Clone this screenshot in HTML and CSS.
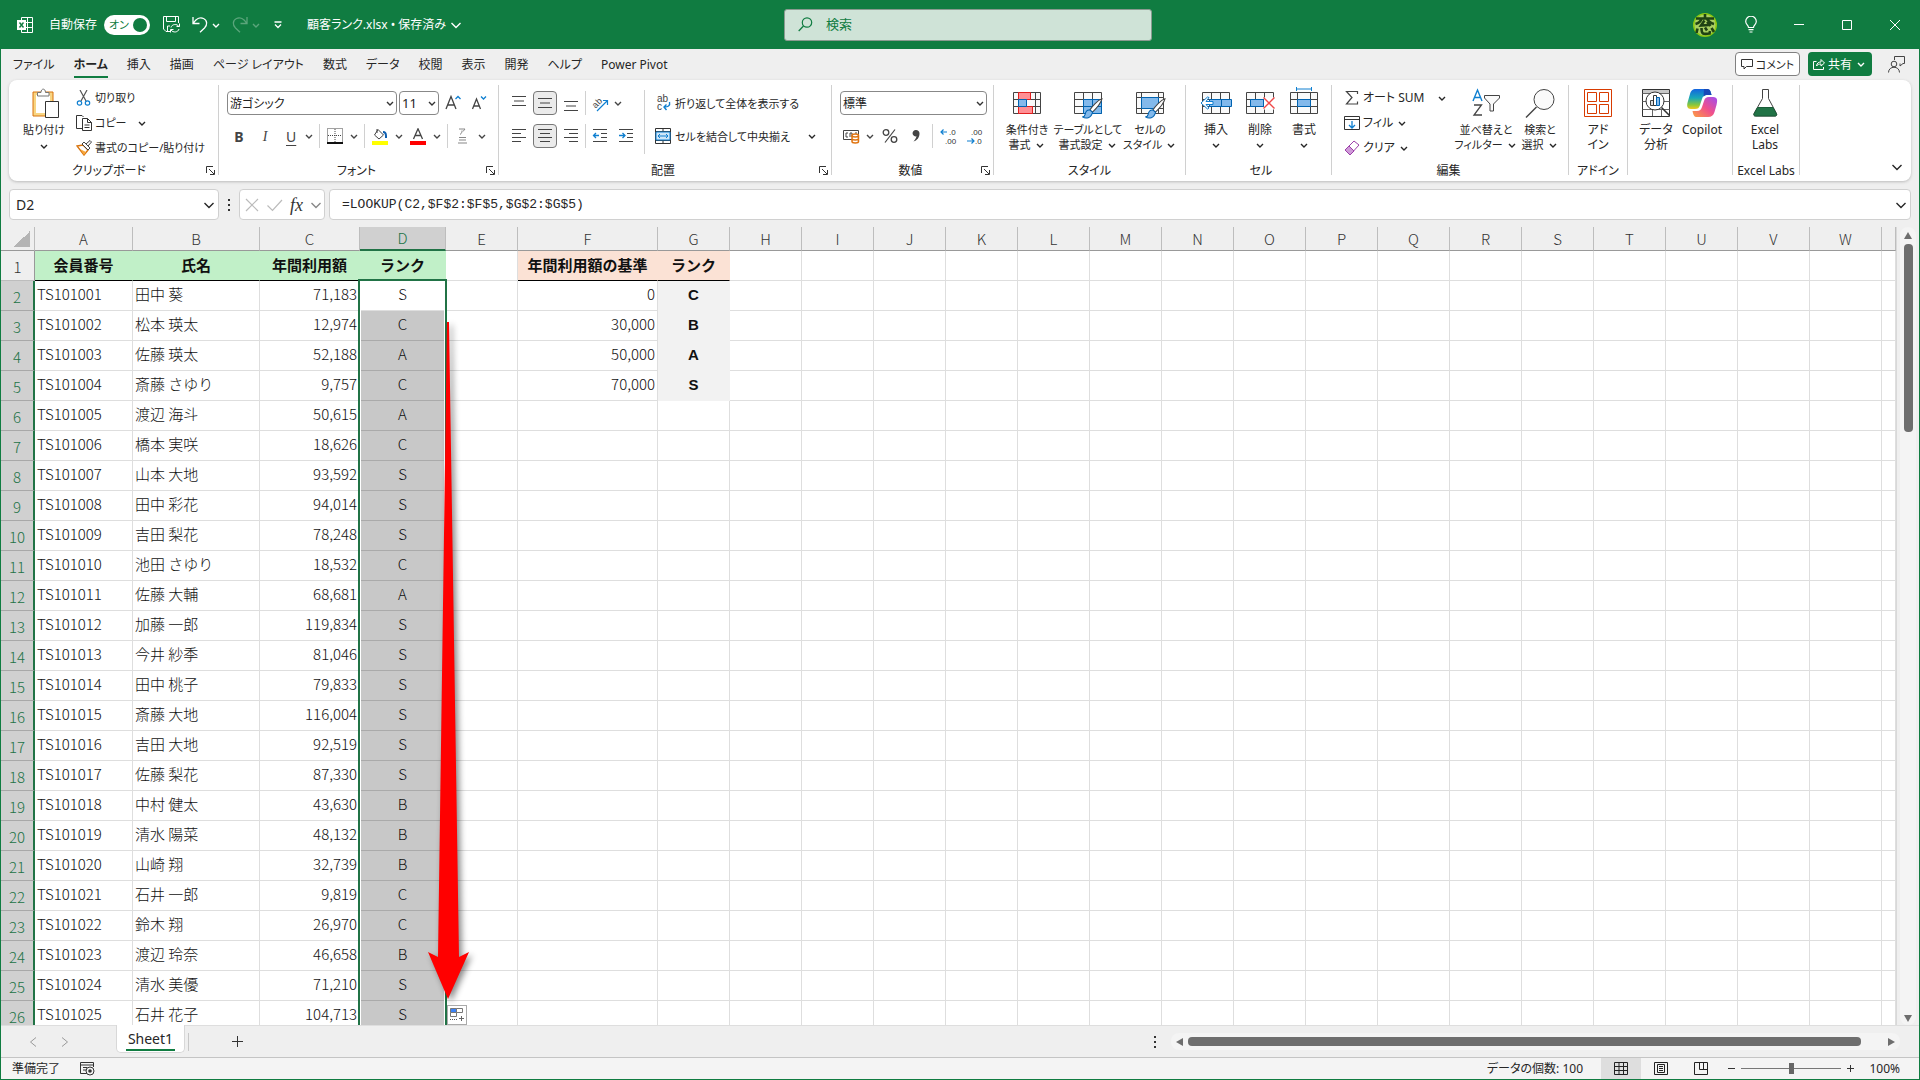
FILE: index.html
```html
<!DOCTYPE html>
<html lang="ja">
<head>
<meta charset="utf-8">
<title>顧客ランク.xlsx</title>
<link rel="stylesheet" href="styles.css">
</head>
<body>
<svg class="defs" aria-hidden="true">
  <symbol id="chev" viewBox="0 0 12 12"><path d="M3 5l3 3 3-3" fill="none" stroke="currentColor" stroke-width="1.4"/></symbol>
  <symbol id="chev-lg" viewBox="0 0 14 14"><path d="M2.500 5l4.500 4.500L11.500 5" fill="none" stroke="currentColor" stroke-width="1.400"/></symbol>
  <symbol id="launch" viewBox="0 0 9 9"><path d="M.5 7V.5H7M3 3l5 5M8.500 4v4.500H4" fill="none" stroke="#333"/></symbol>
  <symbol id="brush" viewBox="0 0 20 20"><path d="M19 .8C15 2 9.500 8 7.500 11.500l2.500 2C13 10.500 18 5 19 .8z" fill="#fff" stroke="#444"/><path d="M7.500 11.500C5 11 3.500 13 3 15.500c-.3 1.500-1.500 2.300-2.500 2.500 3 2 8.500 1.500 9.500-4.500z" fill="#83b9eb" stroke="#0063b1"/></symbol>
</svg>
<div class="app">
  <header class="titlebar">
    <div class="title-left">
      <svg class="ico-xl" width="16" height="16" viewBox="0 0 16 16"><path d="M4.500 3.500v-3h11v15h-11v-3M4.500 5.500h11M8 10.500h7.500M10.500.5v15M9 5.500h6.500" fill="none" stroke="#fff"/><rect y="3" width="9" height="10" fill="#fff"/><path d="M2.500 5.500l4 5M6.500 5.500l-4 5" stroke="#107c41" stroke-width="1.400"/></svg>
      <label class="autosave"><span>自動保存</span><input type="checkbox" checked><span class="toggle"><span>オン</span></span></label>
      <button class="tbtn save" aria-label="保存"><svg width="17" height="17" viewBox="0 0 17 17"><path d="M7 15.500H3L.5 13V.5h15V7M3.500.5v5h9v-5M4.500 15V10H7" fill="none" stroke="#fff"/><path d="M8 11.500c.8-3.500 6-4 8-1M16.500 7.500v3h-3M16 13c-.8 3.500-6 4-8 1M7.500 16.500v-3h3" fill="none" stroke="#fff"/></svg></button>
      <button class="tbtn undo" aria-label="元に戻す"><svg width="16" height="17" viewBox="0 0 16 17"><path d="M1 1v6.500h6.500M1.500 7C4 3 8 .8 11.500 2.500 15.500 4.500 15.500 9 12.500 12L8 16.300" fill="none" stroke="#fff" stroke-width="1.300"/></svg><svg class="c"><use href="#chev"/></svg></button>
      <button class="tbtn redo" aria-label="やり直し"><svg width="16" height="17" viewBox="0 0 16 17"><path d="M15 1v6.500H8.500M14.500 7C12 3 8 .8 4.500 2.500.5 4.500.5 9 3.500 12L8 16.300" fill="none" stroke="currentColor" stroke-width="1.300"/></svg><svg class="c"><use href="#chev"/></svg></button>
      <button class="tbtn custom" aria-label="カスタマイズ"><svg width="8" height="8" viewBox="0 0 8 8"><path d="M.5 1h7M1 3.500L4 6.500l3-3" fill="none" stroke="#fff" stroke-width="1.300"/></svg></button>
      <button class="tbtn docname">顧客ランク.xlsx • 保存済み<svg class="cl"><use href="#chev-lg"/></svg></button>
    </div>
    <label class="search"><svg width="15" height="15" viewBox="0 0 15 15"><circle cx="9" cy="5.500" r="4.700" fill="none" stroke="#107c41" stroke-width="1.200"/><path d="M5.500 9L.7 14" stroke="#107c41" stroke-width="1.300"/></svg><input type="text" placeholder="検索" aria-label="検索"></label>
    <div class="title-right">
      <svg class="avatar" width="24" height="24" viewBox="0 0 24 24"><circle cx="12" cy="12" r="12" fill="#8cc810"/><circle cx="12" cy="12" r="10.500" fill="#a9cf62"/><g fill="none" stroke="#1f4213" stroke-width="2.600"><path d="M3 5.500h18M12 1v5M8.500 5.500C8 8 6 10 2.500 11M14 5.500c1 3 3 4.500 7 5.500M11.500 7.500L8 12.500l8-.5M14 9l3.500 4M4.500 15.500L3.500 20M8.500 15c0 6 1 6.500 8 5.500l.5-2.500M12 14.500l2 3M18.500 15l2.500 4"/></g></svg>
      <button class="wbtn bulb" aria-label="ヒント"><svg width="12" height="17" viewBox="0 0 12 17"><path d="M3.500 11.500C3.500 9 .7 8.500.7 5.500a5.300 5.300 0 0 1 10.600 0c0 3-2.800 3.500-2.800 6zM3.500 13.700h5M4.500 16h3" fill="none" stroke="#fff" stroke-width="1.200"/></svg></button>
      <button class="wbtn" aria-label="最小化"><svg width="10" height="10"><path d="M0 4.500h10" stroke="#fff"/></svg></button>
      <button class="wbtn" aria-label="最大化"><svg width="10" height="10"><path d="M.5.5h9v9h-9z" fill="none" stroke="#fff"/></svg></button>
      <button class="wbtn" aria-label="閉じる"><svg width="10" height="10"><path d="M0 0l10 10M10 0L0 10" stroke="#fff"/></svg></button>
    </div>
  </header>

  <nav class="tabs">
    <a href="#">ファイル</a><a href="#" class="on">ホーム</a><a href="#">挿入</a><a href="#">描画</a><a href="#">ページ レイアウト</a><a href="#">数式</a><a href="#">データ</a><a href="#">校閲</a><a href="#">表示</a><a href="#">開発</a><a href="#">ヘルプ</a><a href="#">Power Pivot</a>
    <div class="tab-actions">
      <button class="comment"><svg width="12" height="12" viewBox="0 0 12 12"><path d="M.5 1.500h11v7H5.500L3 11V8.500H.5z" fill="none" stroke="#333"/></svg>コメント</button>
      <button class="share"><svg width="12" height="12" viewBox="0 0 12 12"><path d="M3.500 3.500h-3v8h10V9M3.500 8c.5-3 2-4 4.500-4V1.500L11.500 5 8 8V6C6 6 4.500 6.500 3.500 8z" fill="none" stroke="#fff"/></svg>共有<svg class="c"><use href="#chev"/></svg></button>
      <button class="person" aria-label="ユーザー"><svg width="17" height="17" viewBox="0 0 17 17"><path d="M6.500 4V.5h10v7H15L12 10V7.500" fill="none" stroke="#444"/><circle cx="6" cy="8" r="2.800" fill="none" stroke="#444"/><path d="M.5 16.500c0-7 11-7 11 0" fill="none" stroke="#444"/></svg></button>
    </div>
  </nav>

  <section class="ribbon">
    <div class="group g-clip">
      <div class="body">
        <button class="big"><svg width="32" height="32" viewBox="0 0 32 32"><path d="M5 5h20v24H5z" fill="#f8d583" stroke="#d8730c"/><path d="M8 8h14v18H8z" fill="#fff"/><path d="M9.500 9V5.500H13C13 1 17.500 1 17.500 5.500H21V9z" fill="#fff" stroke="#777"/><path d="M17.500 14.500h13v16h-13z" fill="#fff" stroke="#333"/></svg><span>貼り付け</span><svg class="c"><use href="#chev"/></svg></button>
        <div class="list">
          <button><svg width="16" height="16" viewBox="0 0 16 16"><path d="M4 0l6 11M11 0L5 11" stroke="#555" stroke-width="1.200"/><circle cx="3.500" cy="13" r="2.200" fill="none" stroke="#0f7fd0" stroke-width="1.200"/><circle cx="11.500" cy="13" r="2.200" fill="none" stroke="#0f7fd0" stroke-width="1.200"/></svg>切り取り</button>
          <button><svg width="16" height="16" viewBox="0 0 16 16"><path d="M6 13.500H.5V.5H6L7.500 2" fill="none" stroke="#333"/><path d="M6.500 3.500h5l4 4v8h-9zM11.500 3.500v4h4M8.500 10h5M8.500 12.500h5" fill="#fff" stroke="#333"/></svg><span class="wide">コピー</span><svg class="c"><use href="#chev"/></svg></button>
          <button><svg width="16" height="16" viewBox="0 0 16 16"><path d="M1 6l6-1 5 5-4 5z" fill="#fff" stroke="#d8730c" stroke-width="1.400"/><path d="M4 9l6 3-2 3z" fill="#f8a83c"/><path d="M6 4l2-2 6 6-2 2zM10 4l4-3.500L15.500 2 12 6" fill="#fff" stroke="#444"/></svg>書式のコピー/貼り付け</button>
        </div>
      </div>
      <div class="cap"><span>クリップボード</span><svg class="l"><use href="#launch"/></svg></div>
    </div>

    <div class="group g-font">
      <div class="body rows">
        <div class="row">
          <select class="combo w-font" aria-label="フォント"><option>游ゴシック</option></select>
          <select class="combo w-size" aria-label="サイズ"><option>11</option></select>
          <button class="ib" aria-label="拡大"><svg width="16" height="16" viewBox="0 0 16 16"><path d="M1 14L6 1.500 11 14M2.500 10h7" fill="none" stroke="#444" stroke-width="1.300"/><path d="M10.500 4L13 1.500 15.500 4" fill="none" stroke="#0f7fd0" stroke-width="1.300"/></svg></button>
          <button class="ib" aria-label="縮小"><svg width="16" height="16" viewBox="0 0 16 16"><path d="M1.500 14L5.500 4 9.500 14M3 11h5" fill="none" stroke="#444" stroke-width="1.300"/><path d="M10 1.500L12.500 4 15 1.500" fill="none" stroke="#0f7fd0" stroke-width="1.300"/></svg></button>
        </div>
        <div class="row">
          <button class="ib b">B</button><button class="ib i">I</button><button class="ib sp"><span class="u">U</span><svg class="c"><use href="#chev"/></svg></button>
          <i class="sep"></i>
          <button class="ib sp" aria-label="罫線"><svg width="16" height="16" viewBox="0 0 16 16"><path d="M.5.5h15v14H.5zM8 1v13M1 7.500h14" fill="none" stroke="#444" stroke-dasharray="1 1"/><path d="M0 15h16" stroke="#111" stroke-width="2"/></svg><svg class="c"><use href="#chev"/></svg></button>
          <i class="sep"></i>
          <button class="ib sp" aria-label="塗りつぶし"><svg width="16" height="17" viewBox="0 0 16 17"><path d="M6 1.500l5.500 5.500L7 11 2.500 7zM5 1v4" fill="#fff" stroke="#444"/><path d="M11 4c2.500 0 3 2 3 4v2" fill="none" stroke="#0f5fb0" stroke-width="2"/><rect y="13" width="16" height="4" fill="#ff0"/></svg><svg class="c"><use href="#chev"/></svg></button>
          <button class="ib sp" aria-label="文字色"><svg width="16" height="17" viewBox="0 0 16 17"><path d="M3.500 11L8 .8 12.500 11M5 7.500h6" fill="none" stroke="#444" stroke-width="1.300"/><rect y="13" width="16" height="4" fill="#f00"/></svg><svg class="c"><use href="#chev"/></svg></button>
          <i class="sep"></i>
          <button class="ib sp" aria-label="ふりがな"><svg width="14" height="16" viewBox="0 0 14 16"><path d="M4 1h6L8 3.500M7 2.500c0 2-.5 3-2 4" fill="none" stroke="#888"/><path d="M4 9.500h7M4 12h7M3 15h9" stroke="#888" stroke-width="1.200"/></svg><svg class="c"><use href="#chev"/></svg></button>
        </div>
      </div>
      <div class="cap"><span>フォント</span><svg class="l"><use href="#launch"/></svg></div>
    </div>

    <div class="group g-align">
      <div class="body">
        <div class="rows">
          <div class="row">
            <button class="ib" aria-label="上揃え"><svg width="16" height="16"><path d="M1 1.500h14M3 6h10M1 10.500h14" stroke="#444"/></svg></button>
            <button class="ib sel" aria-label="上下中央"><svg width="16" height="16"><path d="M1 3.500h14M3 8h10M1 12.500h14" stroke="#444"/></svg></button>
            <button class="ib" aria-label="下揃え"><svg width="16" height="16"><path d="M1 6.500h14M3 11h10M1 15.500h14" stroke="#444"/></svg></button>
            <i class="sep"></i>
            <button class="ib sp" aria-label="方向"><svg width="18" height="18" viewBox="0 0 18 18"><text x="1" y="12" font-size="9" fill="#444" transform="rotate(-45 6 9)">ab</text><path d="M6 17L16.500 6.500M16.500 11V6.500H12" fill="none" stroke="#0f7fd0" stroke-width="1.200"/></svg><svg class="c"><use href="#chev"/></svg></button>
          </div>
          <div class="row">
            <button class="ib" aria-label="左揃え"><svg width="16" height="16"><path d="M1 1.500h14M1 5.500h9M1 9.500h14M1 13.500h9" stroke="#444"/></svg></button>
            <button class="ib sel" aria-label="中央揃え"><svg width="16" height="16"><path d="M1 1.500h14M3 5.500h10M1 9.500h14M3 13.500h10" stroke="#444"/></svg></button>
            <button class="ib" aria-label="右揃え"><svg width="16" height="16"><path d="M1 1.500h14M6 5.500h9M1 9.500h14M6 13.500h9" stroke="#444"/></svg></button>
            <i class="sep"></i>
            <button class="ib" aria-label="字下げ解除"><svg width="16" height="16"><path d="M1 1.500h14M9 5.500h6M9 9.500h6M1 13.500h14" stroke="#444"/><path d="M7 7.500H1.500M4 5L1.500 7.500 4 10" fill="none" stroke="#0f7fd0" stroke-width="1.300"/></svg></button>
            <button class="ib" aria-label="字下げ"><svg width="16" height="16"><path d="M1 1.500h14M9 5.500h6M9 9.500h6M1 13.500h14" stroke="#444"/><path d="M1 7.500h6M4.500 5L7 7.500 4.500 10" fill="none" stroke="#0f7fd0" stroke-width="1.300"/></svg></button>
          </div>
        </div>
        <i class="sep tall"></i>
        <div class="rows texts">
          <button><svg width="16" height="20" viewBox="0 0 16 20"><text x="2" y="9" font-size="10" fill="#444">ab</text><text x="2" y="17" font-size="10" fill="#444">c</text><path d="M14.500 9c1 4-2 5-5 5M11.500 11.500L9 14l2.500 3" fill="none" stroke="#0f7fd0" stroke-width="1.400"/></svg>折り返して全体を表示する</button>
          <button><svg width="16" height="16" viewBox="0 0 16 16"><path d="M.5.5h15v15H.5zM.5 3.500h15M.5 12.500h15M8 .5v3M8 12.500v3" fill="#fff" stroke="#333"/><path d="M1 4h14v8H1z" fill="#cfe6f8" stroke="#0f7fd0"/><path d="M3 8h10M5 6L3 8l2 2M11 6l2 2-2 2" fill="none" stroke="#0f7fd0"/></svg><span class="wide">セルを結合して中央揃え</span><svg class="c"><use href="#chev"/></svg></button>
        </div>
      </div>
      <div class="cap"><span>配置</span><svg class="l"><use href="#launch"/></svg></div>
    </div>

    <div class="group g-num">
      <div class="body rows">
        <div class="row"><select class="combo w-num" aria-label="表示形式"><option>標準</option></select></div>
        <div class="row">
          <button class="ib sp" aria-label="通貨"><svg width="17" height="16" viewBox="0 0 17 16"><path d="M.5 2.500h15v9H.5zM5 5H3v4h2M7 9V5h2v4M12 5h2" fill="none" stroke="#444"/><path d="M9 7.500v6c0 2 6.500 2 6.500 0v-6c0-2-6.500-2-6.500 0c0 2 6.500 2 6.500 0M9 10.500c0 2 6.500 2 6.500 0" fill="#fff" stroke="#e0730f" stroke-width="1.500"/></svg><svg class="c"><use href="#chev"/></svg></button>
          <button class="ib" aria-label="パーセント"><svg width="16" height="16" viewBox="0 0 16 16"><circle cx="4" cy="4.500" r="2.800" fill="none" stroke="#444" stroke-width="1.300"/><circle cx="12" cy="11.500" r="2.800" fill="none" stroke="#444" stroke-width="1.300"/><path d="M13 1.500l-10 13" stroke="#444" stroke-width="1.200"/></svg></button>
          <button class="ib" aria-label="桁区切り"><svg width="10" height="14" viewBox="0 0 10 14"><path d="M5 1a3.200 3.200 0 1 0 .5 6.300C5 9.500 4 11 2.500 12.500 6 11.500 8.500 8.500 8.500 4.500 8.500 2.500 7 1 5 1z" fill="#444"/></svg></button>
          <i class="sep"></i>
          <button class="ib" aria-label="小数点以下を増やす"><svg width="18" height="20" viewBox="0 0 18 20"><path d="M7 6H1M3.500 3.500L1 6l2.500 2.500" fill="none" stroke="#0f7fd0" stroke-width="1.200"/><text x="9" y="9" font-size="8" fill="#333">.0</text><text x="5" y="18" font-size="8" fill="#333">.00</text></svg></button>
          <button class="ib" aria-label="小数点以下を減らす"><svg width="18" height="20" viewBox="0 0 18 20"><path d="M1 15h7M5.500 12.500L8 15l-2.500 2.500" fill="none" stroke="#0f7fd0" stroke-width="1.200"/><text x="5" y="9" font-size="8" fill="#333">.00</text><text x="9" y="18" font-size="8" fill="#333">.0</text></svg></button>
        </div>
      </div>
      <div class="cap"><span>数値</span><svg class="l"><use href="#launch"/></svg></div>
    </div>

    <div class="group g-style">
      <div class="body">
        <button class="big w60"><svg width="32" height="32" viewBox="0 0 32 32"><path d="M2.500 5.500h27v21h-27zM2.500 12.500h27M2.500 19.500h27M7.500 5.500v21M24.500 5.500v21" fill="#fafafa" stroke="#444"/><path d="M7.500 5.500h12v7h-12zM7.500 19.500h14v7h-14z" fill="#ff8f94" stroke="#e01f1f"/><path d="M7.500 12.500h8v7h-8z" fill="#83b9eb" stroke="#0063b1"/></svg><span>条件付き<br>書式<svg class="c"><use href="#chev"/></svg></span></button>
        <button class="big w62"><svg width="32" height="32" viewBox="0 0 32 32"><path d="M2.500 5.500h27v21h-27zM2.500 12.500h27M2.500 19.500h27M11.500 5.500v21M20.500 5.500v21" fill="#fafafa" stroke="#444"/><path d="M11.500 12.500h18v14h-18zM11.500 19.500h18M20.500 12.500v14" fill="#83b9eb" stroke="#0063b1"/><use href="#brush" x="10" y="11" width="21" height="21"/></svg><span>テーブルとして<br>書式設定<svg class="c"><use href="#chev"/></svg></span></button>
        <button class="big w62"><svg width="32" height="32" viewBox="0 0 32 32"><path d="M2.500 5.500h27v21h-27zM2.500 10.500h27M2.500 21.500h27M7.500 5.500v21M24.500 5.500v21" fill="#fafafa" stroke="#444"/><path d="M7.500 10.500h17v11h-17z" fill="#83b9eb" stroke="#0063b1"/><use href="#brush" x="11" y="11" width="21" height="21"/></svg><span>セルの<br>スタイル<svg class="c"><use href="#chev"/></svg></span></button>
      </div>
      <div class="cap"><span>スタイル</span></div>
    </div>

    <div class="group g-cell">
      <div class="body">
        <button class="big w44"><svg width="32" height="32" viewBox="0 0 32 32"><path d="M2.500 5.500h27v21h-27zM2.500 12.500h27M2.500 19.500h27M11.500 5.500v21M20.500 5.500v21" fill="#fafafa" stroke="#444"/><path d="M9.500 12.500h22v7h-22zM21.500 12.500v7" fill="#83b9eb" stroke="#0063b1"/><path d="M13 14.500H6l3-4L7.500 10 1 16l6.500 6L9 21l-3-3.500h7z" fill="#fff" stroke="#0f7fd0"/></svg><span>挿入<br><svg class="c"><use href="#chev"/></svg></span></button>
        <button class="big w44"><svg width="32" height="32" viewBox="0 0 32 32"><path d="M2.500 5.500h27v21h-27zM2.500 12.500h27M2.500 19.500h27M11.500 5.500v21M20.500 5.500v21" fill="#fafafa" stroke="#444"/><path d="M6.500 12.500h13v7h-13z" fill="#83b9eb" stroke="#0063b1"/><path d="M20 10.500h12v12H20z" fill="#fff"/><path d="M19.500 10.500l11 11M30.500 10.500l-11 11" stroke="#f04848" stroke-width="1.400"/></svg><span>削除<br><svg class="c"><use href="#chev"/></svg></span></button>
        <button class="big w44"><svg width="32" height="32" viewBox="0 0 32 32"><path d="M2.500 5.500h27v21h-27zM2.500 12.500h27M2.500 19.500h27M9.500 5.500v21M22.500 5.500v21" fill="#fafafa" stroke="#444"/><path d="M9.500 12.500h13v7h-13z" fill="#83b9eb" stroke="#0063b1"/><path d="M8.500 0v4M23.500 0v4M8.500 2h15" stroke="#0f7fd0"/></svg><span>書式<br><svg class="c"><use href="#chev"/></svg></span></button>
      </div>
      <div class="cap"><span>セル</span></div>
    </div>

    <div class="group g-edit">
      <div class="body">
        <div class="list">
          <button><svg width="16" height="16" viewBox="0 0 16 16"><path d="M13.500 4V1.500h-11L8 7.500l-5.500 6.500h11v-2.500" fill="none" stroke="#444" stroke-width="1.200"/></svg><span class="wide">オート SUM</span><svg class="c"><use href="#chev"/></svg></button>
          <button><svg width="16" height="16" viewBox="0 0 16 16"><path d="M.5 1.500h15v13H.5zM.5 4.500h15" fill="none" stroke="#333"/><path d="M8 6v7M5 10l3 3 3-3" fill="none" stroke="#0f7fd0" stroke-width="1.300"/></svg>フィル<svg class="c"><use href="#chev"/></svg></button>
          <button><svg width="16" height="16" viewBox="0 0 16 16"><path d="M10 1l5 4-9 10-5-5z" fill="#fff" stroke="#9b3fa8"/><path d="M5 6l5 5-4 4-5-5z" fill="#cf9ad8" stroke="#9b3fa8"/></svg>クリア<svg class="c"><use href="#chev"/></svg></button>
        </div>
        <button class="big w60"><svg width="32" height="32" viewBox="0 0 32 32"><path d="M3 14L7.500 3 12 14M4.500 10.500h6" fill="none" stroke="#0f7fd0" stroke-width="1.400"/><path d="M4 18h7.500L4 28h8" fill="none" stroke="#444" stroke-width="1.300"/><path d="M14.500 8.500h15v2.500l-6 6v7h-3.500v-7l-5.500-6z" fill="#fafafa" stroke="#444"/></svg><span>並べ替えと<br>フィルター<svg class="c"><use href="#chev"/></svg></span></button>
        <button class="big w48"><svg width="32" height="32" viewBox="0 0 32 32"><circle cx="20" cy="12.500" r="10" fill="#fafafa" stroke="#444"/><path d="M12.500 20L2 30.500" stroke="#444" stroke-width="1.400"/></svg><span>検索と<br>選択<svg class="c"><use href="#chev"/></svg></span></button>
      </div>
      <div class="cap"><span>編集</span></div>
    </div>

    <div class="group g-addin">
      <div class="body"><button class="big w48"><svg width="32" height="32" viewBox="0 0 32 32"><path d="M2.500 2.500h27v27h-27zM5.500 5.500h9v9h-9zM17.500 5.500h9v9h-9zM5.500 17.500h9v9h-9zM17.500 17.500h9v9h-9z" fill="#fff" stroke="#d83b01"/></svg><span>アド<br>イン</span></button></div>
      <div class="cap"><span>アドイン</span></div>
    </div>
    <div class="group g-data">
      <div class="body">
        <button class="big w44"><svg width="32" height="32" viewBox="0 0 32 32"><path d="M2.500 2.500h27v27h-27z" fill="#fff" stroke="#333"/><path d="M3 3h26v3H3z" fill="#c8c8c8"/><path d="M2.500 6.500h27M2.500 14.500h6M23 14.500h6.500M2.500 22.500h27M12.500 22v7M21.500 22v7" stroke="#666"/><circle cx="15" cy="14" r="9" fill="#fff" stroke="#333"/><path d="M21.500 20.500l8 8" stroke="#333" stroke-width="1.600"/><path d="M10.500 13.500h3v5h-3z" fill="#ddd" stroke="#444"/><path d="M13.500 8.500h3v10h-3z" fill="#fff" stroke="#333"/><path d="M16.500 10.500h3v8h-3z" fill="#83b9eb" stroke="#0063b1"/></svg><span>データ<br>分析</span></button>
        <button class="big w48"><svg width="32" height="32" viewBox="0 0 32 32"><defs><linearGradient id="cp1" x1="0" y1="0" x2="0" y2="1"><stop offset="0" stop-color="#1464e0"/><stop offset=".45" stop-color="#18a8b8"/><stop offset=".8" stop-color="#8cc838"/><stop offset="1" stop-color="#f0c820"/></linearGradient><linearGradient id="cp2" x1="1" y1="0" x2="0" y2="1"><stop offset="0" stop-color="#a04cf0"/><stop offset=".5" stop-color="#f0508c"/><stop offset="1" stop-color="#fca040"/></linearGradient></defs><path d="M10 2h11c3 0 3.500 2 4.500 6h-5c-2.500 0-3.500 1-4.500 4l-2 6c-1 3-2 4-5 4H5c-5 0-4-5-3-8l2-7c1-3.500 2.500-5 6-5z" fill="url(#cp1)"/><path d="M22 30H11c-3 0-3.500-2-4.500-6h4.500c3 0 4-1.500 5-4l2-6c1-3 2-4 5-4h4c5 0 4.500 4 3.500 8l-2 7c-1 3.500-3 5-6.500 5z" fill="url(#cp2)"/><path d="M18 2h3c3 0 3.500 2 4.500 6h-5c-1.500 0-2.500 1-3 2z" fill="#1848b8"/></svg><span>Copilot</span></button>
      </div>
      <div class="cap"></div>
    </div>
    <div class="group g-labs">
      <div class="body"><button class="big w48"><svg width="32" height="32" viewBox="0 0 32 32"><path d="M13.500 2.500h6v9l8 15c.6 1.500 0 2.500-1.500 2.500H6.500c-1.500 0-2-1-1.500-2.500l8.500-15z" fill="#fff" stroke="#444"/><path d="M8.500 20.500h15.500l3.500 6.500c.3 1 0 2-1.500 2H6.500c-1.500 0-1.800-1-1.500-2z" fill="#217346" stroke="#1a5c38"/></svg><span>Excel<br>Labs</span></button></div>
      <div class="cap"><span>Excel Labs</span></div>
    </div>
    <button class="collapse" aria-label="リボンを折りたたむ"><svg class="cl"><use href="#chev-lg"/></svg></button>
  </section>

  <section class="formula">
    <div class="namebox"><input type="text" value="D2" aria-label="名前ボックス"><svg class="cl"><use href="#chev-lg"/></svg></div>
    <span class="dots"></span>
    <div class="fx">
      <button aria-label="キャンセル"><svg width="16" height="16"><path d="M2 2l12 12M14 2L2 14" stroke="#bbb" stroke-width="1.200"/></svg></button>
      <button aria-label="入力"><svg width="18" height="16"><path d="M1.500 8.500l5 5L16 3" fill="none" stroke="#bbb" stroke-width="1.200"/></svg></button>
      <button class="fxb">fx</button>
      <svg class="cl dimc"><use href="#chev-lg"/></svg>
    </div>
    <div class="fbox"><input type="text" value="=LOOKUP(C2,$F$2:$F$5,$G$2:$G$5)" aria-label="数式バー"><svg class="cl"><use href="#chev-lg"/></svg></div>
  </section>

  <main class="sheet">
    <div class="grid">
      <table><colgroup id="cols"></colgroup><thead id="head"></thead><tbody id="rows"></tbody></table>
      <div class="selection"></div>
      <svg class="arrow" width="60" height="700" viewBox="0 0 60 700"><path d="M28 12h2l10 635 10-5-21 47-20-47 10 5z" fill="#f00"/></svg>
      <button class="autofill" aria-label="オートフィル オプション"><svg width="20" height="20"><path d="M3.500 3.500h6v4h-6z" fill="#3b82f6" stroke="#777"/><path d="M9.500 3.500h6v4h-6zM3.500 7.500h6v4h-6z" fill="#fff" stroke="#777"/><path d="M3 14.500h7" stroke="#555" stroke-dasharray="1 1"/><path d="M12 13.500h5M14.500 11v5" stroke="#666"/></svg></button>
    </div>
    <div class="vscroll"><svg width="8" height="7"><path d="M4 0l4 7H0z" fill="#6e6e6e"/></svg><span></span><svg width="8" height="7"><path d="M0 0h8L4 7z" fill="#6e6e6e"/></svg></div>
  </main>

  <footer class="sheetbar">
    <button class="nav" aria-label="前へ"><svg width="8" height="10"><path d="M7 .5L1.500 5 7 9.500" fill="none" stroke="#999"/></svg></button>
    <button class="nav" aria-label="次へ"><svg width="8" height="10"><path d="M1 .5L6.500 5 1 9.500" fill="none" stroke="#999"/></svg></button>
    <button class="stab"><span>Sheet1</span></button><i class="ssep"></i>
    <button class="add" aria-label="シートの追加"><svg width="11" height="11"><path d="M0 5.500h11M5.500 0v11" stroke="#333"/></svg></button>
    <span class="dots"></span>
    <div class="hscroll"><svg width="7" height="8"><path d="M7 0v8L0 4z" fill="#6e6e6e"/></svg><span></span><svg width="7" height="8"><path d="M0 0v8l7-4z" fill="#6e6e6e"/></svg></div>
  </footer>

  <footer class="status">
    <span>準備完了</span>
    <svg class="rec" width="15" height="14"><path d="M7 11.500H.5V.5h13V5M.5 3h13M3 5.500h4M3 8h3" fill="none" stroke="#333"/><circle cx="10" cy="9" r="4" fill="#f4f4f4" stroke="#333"/><circle cx="10" cy="9" r="1.800" fill="#333"/></svg>
    <span class="count">データの個数: 100</span>
    <button class="view on" aria-label="標準"><svg width="14" height="13"><path d="M.5.5h13v12H.5zM.5 4.500h13M.5 8.500h13M5 .5v12M9.500.5v12" fill="none" stroke="#222"/></svg></button>
    <button class="view" aria-label="ページ レイアウト"><svg width="14" height="13"><path d="M.5.5h13v12H.5zM3.500 2.500h7v8h-7zM5 4.500h4M5 6.500h4M5 8.500h4" fill="none" stroke="#222"/></svg></button>
    <button class="view" aria-label="改ページ"><svg width="14" height="13"><path d="M.5.5h13v12H.5zM5.500.5v7h8M9.500.5v7" fill="none" stroke="#222"/></svg></button>
    <button class="zb" aria-label="縮小"><svg width="7" height="7"><path d="M0 3.500h7" stroke="#333"/></svg></button>
    <input type="range" min="0" max="100" value="50" aria-label="ズーム">
    <button class="zb" aria-label="拡大"><svg width="7" height="7"><path d="M0 3.500h7M3.500 0v7" stroke="#333"/></svg></button>
    <span class="pct">100%</span>
  </footer>
</div>
<script src="sheet.js"></script>
</body>
</html>
```
FILE: styles.css
```css
* { box-sizing: border-box; }
body { margin: 0; }
.app {
  display: flex; flex-direction: column; height: 100vh; overflow: hidden;
  border: 1px solid #107c41; border-top: 0; background: #efefef; color: #262626;
  font: 12px/15px "Noto Sans", "Noto Sans CJK JP", sans-serif;
  font-feature-settings: "palt";
}
.defs { display: none; }
button, input, select { font: inherit; color: inherit; font-feature-settings: inherit; border: 0; background: none; padding: 0; margin: 0; }
button { display: flex; align-items: center; white-space: nowrap; }
svg { flex: none; display: block; }
svg text { font-family: "Liberation Sans", sans-serif; }
svg.c { width: 12px; height: 12px; }
svg.cl { width: 14px; height: 14px; }
svg.l { width: 9px; height: 9px; }
a { color: inherit; text-decoration: none; }

/* title bar */
.titlebar { flex: none; display: grid; grid-template-columns: 1fr 368px 1fr; align-items: center; height: 49px; padding-left: 16px; background: #107c41; color: #fff; }
.title-left, .title-right { display: flex; align-items: center; }
.autosave { display: flex; align-items: center; gap: 7px; margin-left: 16px; }
.autosave input { position: absolute; opacity: 0; }
.toggle { display: flex; align-items: center; justify-content: space-between; width: 46px; height: 20px; padding: 0 3px 0 5px; border-radius: 10px; background: #fff; color: #107c41; font-size: 11px; white-space: nowrap; }
.toggle::after { content: ""; width: 14px; height: 14px; border-radius: 50%; background: #107c41; }
.save { margin-left: 13px; }
.undo { margin-left: 12px; gap: 2px; }
.redo { margin-left: 10px; gap: 2px; color: #5ba57b; }
.custom { margin-left: 12px; }
.docname { margin-left: 25px; gap: 3px; }
.search { display: flex; align-items: center; gap: 13px; height: 32px; padding-left: 13px; border: 1px solid #8a9a90; border-radius: 3px; background: #cfe3d7; font-size: 13px; }
.search input { flex: 1; outline: 0; }
.search input::placeholder { color: #107c41; opacity: 1; }
.title-right { justify-content: flex-end; }
.avatar { margin-right: 28px; }
.wbtn { justify-content: center; width: 48px; height: 48px; }
.bulb { width: 36px; margin-right: 6px; }
.avatar { margin-right: 36px; }
.avatar + .bulb { width: 12px; margin-right: 18px; margin-left: -8px; }

/* tabs */
.tabs { flex: none; display: flex; align-items: center; gap: 19px; height: 31px; padding: 0 8px 0 12px; }
.tabs a { line-height: 22px; padding-top: 3px; border-bottom: 2px solid transparent; white-space: nowrap; }
.tabs a.on { font-weight: 700; border-color: #107c41; }
.tab-actions { display: flex; align-items: center; margin-left: auto; padding-bottom: 1px; }
.comment, .share { justify-content: center; height: 24px; border-radius: 4px; gap: 3px; width: 65px; }
.comment { background: #fff; border: 1px solid #808080; font-size: 11px; }
.share { width: 64px; margin-left: 8px; background: #107c41; color: #fff; }
.person { margin: 0 6px 0 16px; }

/* ribbon */
.ribbon { flex: none; display: flex; height: 101px; margin: 0 8px; padding-top: 5px; background: #fff; border-radius: 8px; box-shadow: 0 1px 3px #bbb; }
.group { flex: none; display: flex; flex-direction: column; padding-right: 1px; background: linear-gradient(#d0d0d0, #d0d0d0) right top / 1px 90px no-repeat; }
.body { display: flex; height: 75px; }
.cap { display: flex; align-items: center; height: 21px; padding-right: 3px; }
.cap span { flex: 1; text-align: center; white-space: nowrap; }
.g-clip { width: 210px; padding-left: 3px; }
.g-font { width: 280px; padding-left: 8px; }
.g-align { width: 333px; padding-left: 8px; }
.g-num { width: 162px; padding-left: 8px; }
.g-style { width: 192px; padding-left: 3px; }
.g-cell { width: 146px; padding-left: 8px; }
.g-edit { width: 237px; padding-left: 12px; }
.g-edit .cap { margin-left: -12px; }
.g-addin { width: 59px; padding-left: 5px; }
.g-data { width: 105px; padding-left: 6px; }
.g-labs { width: 67px; padding-left: 8px; }
.g-labs .cap { margin-left: -8px; padding: 0; }
.g-addin .cap { margin-left: -5px; padding: 0; }
.big { flex-direction: column; width: 64px; padding-top: 2px; gap: 3px; font-size: 11px; line-height: 15px; }
.g-cell .big, .g-addin .big, .g-data .big, .g-labs .big { font-size: 12px; }
.big span { text-align: center; }
.big span svg { display: inline-block; vertical-align: -2px; margin-left: 3px; }
.g-cell .big span svg { margin-left: 0; }
.big.w60 { width: 60px; }
.big.w62 { width: 62px; }
.big.w44 { width: 44px; }
.big.w48 { width: 48px; }
.list { display: flex; flex-direction: column; }
.list button { height: 25px; gap: 3px; }
.g-clip .list { font-size: 11px; }
.g-clip .list .wide { width: 38px; text-align: left; }
.g-edit .list { width: 112px; }
.g-edit .list .wide { width: 70px; text-align: left; }
.rows { display: flex; flex-direction: column; gap: 9px; padding-top: 6px; }
.row { display: flex; align-items: center; gap: 2px; height: 24px; }
.ib { justify-content: center; width: 24px; height: 24px; border-radius: 4px; font-size: 14px; color: #444; }
.ib.sp { width: 36px; padding-left: 3px; justify-content: space-between; }
.ib.sel { border: 1px solid #777; background: #ebebeb; }
.ib.b { font-weight: 700; }
.ib.i { font-family: "Liberation Serif", serif; font-style: italic; }
.ib .u { padding-left: 4px; text-decoration: underline; text-underline-offset: 3px; }
.sep { width: 1px; height: 24px; margin: 0 2px; background: #d0d0d0; }
.g-align .row .sep { margin: 0; }
.sep.tall { height: 64px; margin: 5px 10px 0 6px; }
.texts { gap: 9px; font-size: 11px; }
.texts button { height: 24px; gap: 4px; }
.texts .wide { width: 127px; text-align: left; }
.combo {
  appearance: none; height: 24px; padding: 0 2px; border: 1px solid #888; border-radius: 4px; color: #222;
  background: #fff url("data:image/svg+xml,%3Csvg xmlns='http://www.w3.org/2000/svg' width='12' height='12'%3E%3Cpath d='M3 5l3 3 3-3' fill='none' stroke='%23333' stroke-width='1.400'/%3E%3C/svg%3E") no-repeat right 0 center;
}
.w-font { width: 170px; }
.w-size { width: 40px; font-size: 13px; }
.w-num { width: 147px; }
.collapse { margin-left: auto; margin-right: 7px; align-self: flex-end; height: 28px; }

/* formula bar */
.formula { flex: none; display: flex; height: 31px; margin: 8px 8px 7px; }
.namebox, .fx, .fbox { display: flex; align-items: center; background: #fff; border: 1px solid #d0d0d0; border-radius: 4px; }
.namebox { width: 210px; padding: 0 2px 0 6px; font-size: 14px; }
.namebox input, .fbox input { flex: 1; min-width: 0; outline: 0; }
.dots { width: 2px; height: 12px; margin: 10px 9px; background: repeating-linear-gradient(#333 0 2px, transparent 2px 5px); }
.fx { width: 86px; padding: 0 1px 0 4px; justify-content: space-between; }
.fxb { font: italic 18px/20px "Liberation Serif", serif; color: #333; }
.dimc { color: #888; }
.fbox { flex: 1; margin-left: 4px; padding: 0 2px 0 12px; }
.fbox input { font: 13px/20px "Liberation Mono", monospace; }

/* worksheet */
.sheet { flex: 1; min-height: 0; display: flex; }
.grid { position: relative; flex: 1; min-width: 0; overflow: hidden; border-right: 1px solid #d8d8d8; }
table { width: 100%; table-layout: fixed; border-collapse: separate; border-spacing: 0; font: 300 15px/20px "Noto Sans CJK JP", sans-serif; font-feature-settings: normal; color: #111; }
th, td { height: 30px; padding: 0 2px 3px 2px; border-right: 1px solid #dedede; border-bottom: 1px solid #dedede; overflow: hidden; white-space: nowrap; font-weight: 300; text-align: left; }
td { background: #fff; }
thead th { height: 24px; padding: 0; text-align: center; background: #efefef; border-color: #bdbdbd; border-bottom-color: #999; color: #333; }
thead th.on { background: #d0d0d0; color: #217346; border-bottom: 2px solid #217346; }
thead .corner { background: linear-gradient(135deg, transparent 50%, #b4b4b4 50%) no-repeat 13px 4px / 16px 16px; }
tbody th { padding: 3px 0 0; text-align: center; background: #efefef; border-right-color: #999; border-bottom-color: #bdbdbd; color: #333; }
tbody th.on { background: #d0d0d0; color: #217346; border-right: 2px solid #217346; border-bottom-color: #a8a8a8; }
.r { text-align: right; }
.c { text-align: center; }
.green, .peach { font-weight: 700; text-align: center; border-bottom-color: #000; padding: 0 0 2px; }
.green { background: #c1f0c8; border-right-color: #c1f0c8; }
.peach { background: #fbe2d5; border-right-color: #fbe2d5; }
.rank { background: #c8c8c8; border-bottom-color: #aaa; }
.key { background: #f2f2f2; border-color: #f2f2f2; padding-bottom: 1px; text-align: center; font: 700 15px/20px "Liberation Sans", sans-serif; }
.selection { position: absolute; left: 357px; top: 52px; width: 89px; bottom: -4px; border: 2px solid #217346; box-shadow: inset 0 0 0 1px #fff; }
.arrow { position: absolute; left: 418px; top: 83px; filter: drop-shadow(3px 3px 3px #0007); }
.autofill { position: absolute; left: 446px; top: 778px; width: 20px; height: 20px; border: 1px solid #aaa; background: #fff; }
.autofill svg { margin: -1px; }
.vscroll { display: flex; flex-direction: column; align-items: center; width: 16px; margin: 0 3px; padding: 5px 0 3px; border-radius: 8px; background: #f4f4f4; gap: 5px; }
.vscroll span { width: 9px; height: 188px; margin-bottom: auto; border-radius: 4px; background: #6e6e6e; }

/* sheet bar */
.sheetbar { flex: none; display: flex; align-items: center; height: 32px; border-top: 1px solid #dedede; }
.nav { justify-content: center; width: 32px; }
.nav:first-child { margin-left: 16px; }
.stab { justify-content: center; align-self: flex-start; height: 28px; width: 69px; margin: -1px 3px 0 35px; background: #fff; border: 1px solid #d8d8d8; border-top: 0; border-radius: 0 0 5px 5px; font-size: 14px; }
.stab span { height: 24px; line-height: 24px; padding: 0 2px; border-bottom: 2px solid #107c41; }
.ssep { width: 1px; height: 18px; background: #c8c8c8; }
.add { margin-left: 43px; margin-right: auto; }
.sheetbar .dots { margin: 0 15px 0 0; }
.hscroll { flex: 0 0 38%; display: flex; align-items: center; gap: 5px; height: 17px; margin-right: 19px; padding: 0 5px; border-radius: 8px; background: #f4f4f4; }
.hscroll span { flex: 1; height: 9px; margin-right: 22px; border-radius: 4px; background: #6e6e6e; }

/* status bar */
.status { flex: none; display: flex; align-items: center; height: 22px; padding: 0 19px 0 11px; border-top: 1px solid #c4c4c4; background: #f4f4f4; }
.rec { margin-left: 20px; }
.count { margin-left: auto; margin-right: 18px; }
.view { justify-content: center; width: 40px; height: 21px; }
.view.on { background: #dedede; }
.zb { width: 7px; }
.view + .zb { margin-left: 7px; }
.status input { appearance: none; width: 100px; height: 12px; margin: 0 6px; background: linear-gradient(#777, #777) center / 100% 1px no-repeat; }
.status input::-webkit-slider-thumb { appearance: none; width: 5px; height: 11px; background: #666; }
.pct { width: 36px; margin-left: 10px; text-align: right; }
```
FILE: sheet.js
```js
const letters = "ABCDEFGHIJKLMNOPQRSTUVW".split("");
const widths = { A: 98, B: 127, C: 100, D: 86, F: 140 };

const members = [
  ["田中 葵", "71,183", "S"], ["松本 瑛太", "12,974", "C"], ["佐藤 瑛太", "52,188", "A"],
  ["斎藤 さゆり", "9,757", "C"], ["渡辺 海斗", "50,615", "A"], ["橋本 実咲", "18,626", "C"],
  ["山本 大地", "93,592", "S"], ["田中 彩花", "94,014", "S"], ["吉田 梨花", "78,248", "S"],
  ["池田 さゆり", "18,532", "C"], ["佐藤 大輔", "68,681", "A"], ["加藤 一郎", "119,834", "S"],
  ["今井 紗季", "81,046", "S"], ["田中 桃子", "79,833", "S"], ["斎藤 大地", "116,004", "S"],
  ["吉田 大地", "92,519", "S"], ["佐藤 梨花", "87,330", "S"], ["中村 健太", "43,630", "B"],
  ["清水 陽菜", "48,132", "B"], ["山崎 翔", "32,739", "B"], ["石井 一郎", "9,819", "C"],
  ["鈴木 翔", "26,970", "C"], ["渡辺 玲奈", "46,658", "B"], ["清水 美優", "71,210", "S"],
  ["石井 花子", "104,713", "S"]
];
const thresholds = [["0", "C"], ["30,000", "B"], ["50,000", "A"], ["70,000", "S"]];

const cell = (text = "", cls = "") => `<td class="${cls}">${text}</td>`;
const blanks = n => cell().repeat(n);

document.getElementById("cols").innerHTML =
  '<col style="width:34px">' + letters.map(l => `<col style="width:${widths[l] || 72}px">`).join("") + "<col>";

document.getElementById("head").innerHTML =
  '<tr><th class="corner"></th>' + letters.map(l => `<th class="${l === "D" ? "on" : ""}">${l}</th>`).join("") + "<th></th></tr>";

let html = "<tr><th>1</th>" +
  ["会員番号", "氏名", "年間利用額", "ランク"].map(t => cell(t, "green")).join("") + cell() +
  cell("年間利用額の基準", "peach") + cell("ランク", "peach") + blanks(17) + "</tr>";

members.forEach(([name, amount, rank], i) => {
  const key = thresholds[i];
  html += `<tr><th class="on">${i + 2}</th>` + cell("TS" + (101001 + i)) + cell(name) + cell(amount, "r") +
    cell(rank, i ? "c rank" : "c") + cell() +
    (key ? cell(key[0], "r") + cell(key[1], "key") : blanks(2)) + blanks(17) + "</tr>";
});
document.getElementById("rows").innerHTML = html;
```
